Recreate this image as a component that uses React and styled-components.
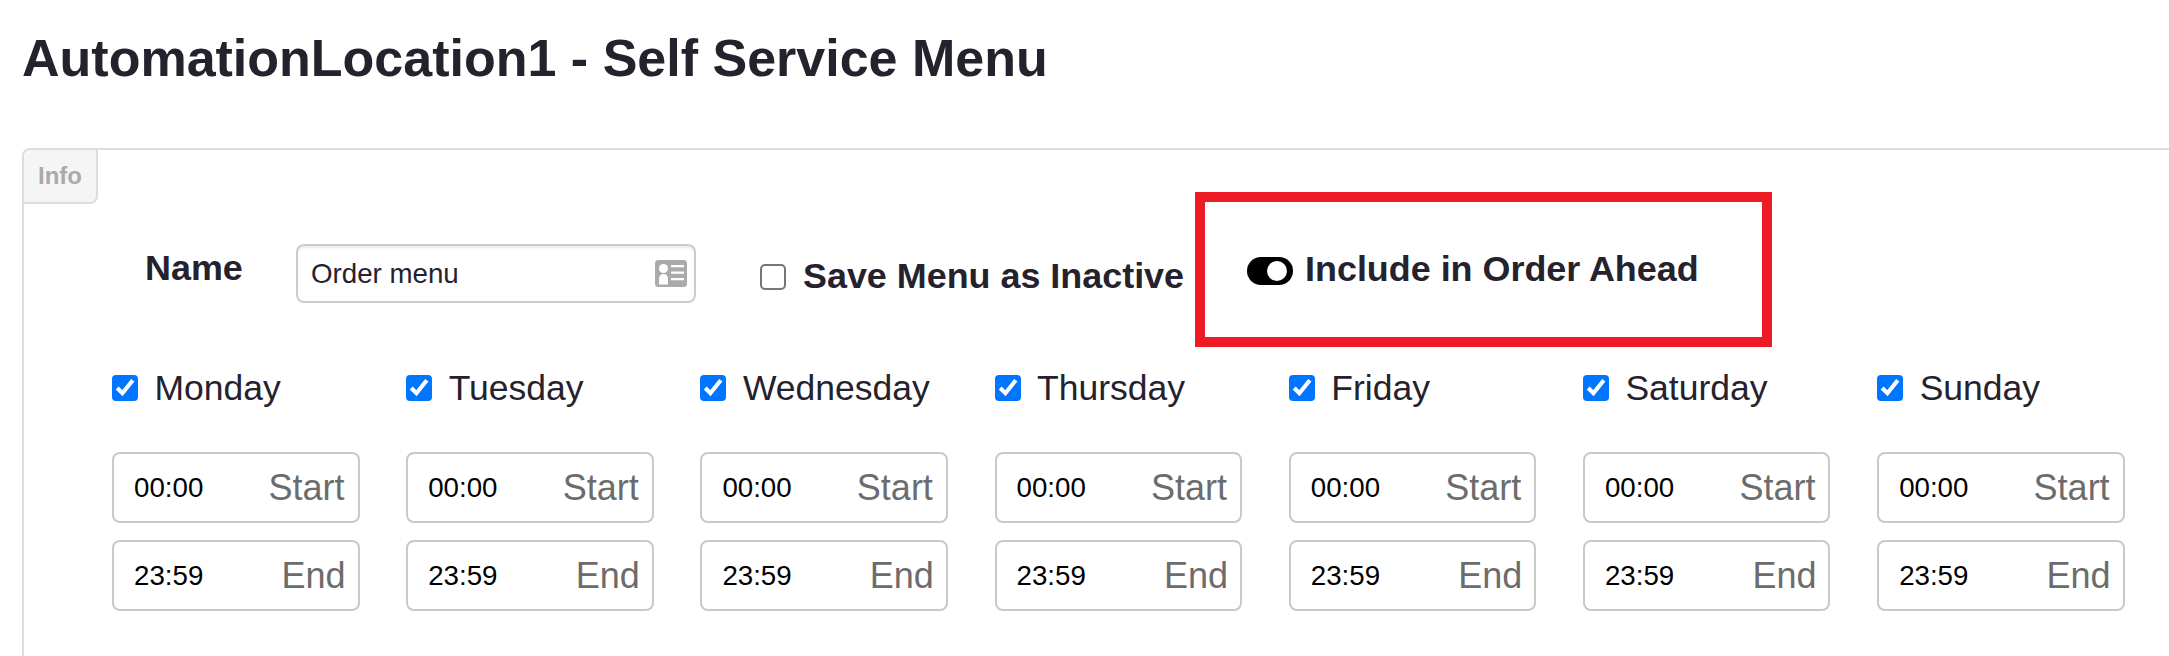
import React from "react";
import styled, { createGlobalStyle } from "styled-components";

const GlobalStyle = createGlobalStyle`
  html, body {
    margin: 0;
    background: #fff;
    overflow: hidden;
  }

  body {
    font-family: "Liberation Sans", Arial, sans-serif;
    color: #25222e;
  }
`;

const Page = styled.div`
  width: 2169px;
  height: 656px;
  padding: 28px 0 0 22px;
  box-sizing: border-box;
  overflow: hidden;
`;

const Title = styled.h1`
  margin: 0 0 60px;
  font-size: 52px;
  line-height: 60px;
  font-weight: 700;
`;

const Panel = styled.section`
  position: relative;
  height: 520px;
  border-top: 2px solid #ddd;
  border-left: 2px solid #ddd;
  border-top-left-radius: 8px;
`;

const Tab = styled.div`
  width: 74px;
  height: 54px;
  box-sizing: border-box;
  padding-top: 12px;
  text-align: center;
  background: #f5f5f5;
  border-right: 2px solid #ddd;
  border-bottom: 2px solid #ddd;
  border-bottom-right-radius: 8px;
  border-top-left-radius: 8px;
  color: #aaa;
  font-size: 24px;
  line-height: 28px;
  font-weight: 700;
`;

const HeaderRow = styled.div`
  display: flex;
  align-items: flex-start;
  padding: 40px 0 0 121px;
`;

const NameLabel = styled.label`
  width: 151px;
  margin-top: 4px;
  font-size: 35.9px;
  line-height: 41px;
  font-weight: 700;
`;

const NameField = styled.div`
  position: relative;
  width: 400px;
  height: 59px;
`;

const NameInput = styled.input`
  width: 100%;
  height: 100%;
  box-sizing: border-box;
  padding: 0 50px 0 13px;
  border: 2px solid #ccc;
  border-radius: 8px;
  box-shadow: inset 0 2px 2px rgba(0, 0, 0, 0.08);
  outline: none;
  color: #25222e;
  font-family: inherit;
  font-size: 27.7px;
`;

const CardIcon = styled.svg`
  position: absolute;
  top: 16px;
  right: 9px;
  width: 32px;
  height: 27px;
`;

const InactiveGroup = styled.label`
  display: flex;
  align-items: center;
  gap: 17px;
  margin: 12px 0 0 64px;
  font-size: 35.9px;
  line-height: 41px;
  font-weight: 700;
`;

// native box at 13px, zoomed so its border and tick scale up with it
const Check = styled.input.attrs({ type: "checkbox" })`
  flex: none;
  width: 13px;
  height: 13px;
  margin: 0;
  zoom: 2;
`;

const ToggleGroup = styled.div`
  display: flex;
  align-items: flex-start;
  gap: 12px;
  margin: 5px 0 0 63px;
  font-size: 35.9px;
  line-height: 41px;
  font-weight: 700;
`;

const Toggle = styled.span`
  position: relative;
  flex: none;
  width: 46px;
  height: 28px;
  margin-top: 8px;
  border-radius: 14px;
  background: #000;

  &::after {
    content: "";
    position: absolute;
    top: 4px;
    right: 6px;
    width: 20px;
    height: 20px;
    border-radius: 50%;
    background: #fff;
  }
`;

const DaysGrid = styled.div`
  display: grid;
  grid-template-columns: repeat(7, 247.5px);
  column-gap: 46.7px;
  padding: 65px 0 0 88px;
`;

const DayColumn = styled.div`
  display: flex;
  flex-direction: column;
`;

const DayHeader = styled.label`
  display: flex;
  align-items: center;
  gap: 16.5px;
  height: 40px;
  margin-bottom: 44px;
  font-size: 35.5px;
  line-height: 40px;
`;

const TimeBox = styled.div`
  display: flex;
  align-items: center;
  justify-content: space-between;
  height: 71px;
  box-sizing: border-box;
  margin-bottom: 17px;
  padding: 0 ${({ $end }) => ($end ? 12 : 13)}px 0 20px;
  border: 2px solid #c9c9c9;
  border-radius: 8px;
`;

const TimeValue = styled.span`
  color: #000;
  font-size: 27.7px;
`;

const TimeTag = styled.span`
  color: #6c6c6c;
  font-size: 36px;
`;

const Annotation = styled.div`
  position: absolute;
  top: 42px;
  left: 1171px;
  width: 577px;
  height: 155px;
  box-sizing: border-box;
  border: 10px solid #ed1c24;
  pointer-events: none;
`;

const DAYS = ["Monday", "Tuesday", "Wednesday", "Thursday", "Friday", "Saturday", "Sunday"];

function AddressCard() {
  return (
    <CardIcon viewBox="0 0 32 27">
      <rect width="32" height="27" rx="3.5" fill="#aaa" />
      <circle cx="8.5" cy="8.5" r="4.5" fill="#fff" />
      <path d="M4 24.5v-6c0-2.5 2-4.5 4.5-4.5s4.500 2 4.500 4.500v6z" fill="#fff" />
      <path d="M16 5h13v2.200H16zM16 11.500h13v2.200H16zM16 18h13v2.200H16z" fill="#fff" />
    </CardIcon>
  );
}

export default function App() {
  return (
    <Page>
      <GlobalStyle />
      <Title>AutomationLocation1 - Self Service Menu</Title>
      <Panel>
        <Tab>Info</Tab>
        <HeaderRow>
          <NameLabel>Name</NameLabel>
          <NameField>
            <NameInput defaultValue="Order menu" />
            <AddressCard />
          </NameField>
          <InactiveGroup>
            <Check />
            Save Menu as Inactive
          </InactiveGroup>
          <ToggleGroup>
            <Toggle />
            Include in Order Ahead
          </ToggleGroup>
        </HeaderRow>
        <DaysGrid>
          {DAYS.map((day) => (
            <DayColumn key={day}>
              <DayHeader>
                <Check defaultChecked />
                {day}
              </DayHeader>
              <TimeBox>
                <TimeValue>00:00</TimeValue>
                <TimeTag>Start</TimeTag>
              </TimeBox>
              <TimeBox $end>
                <TimeValue>23:59</TimeValue>
                <TimeTag>End</TimeTag>
              </TimeBox>
            </DayColumn>
          ))}
        </DaysGrid>
        <Annotation />
      </Panel>
    </Page>
  );
}
